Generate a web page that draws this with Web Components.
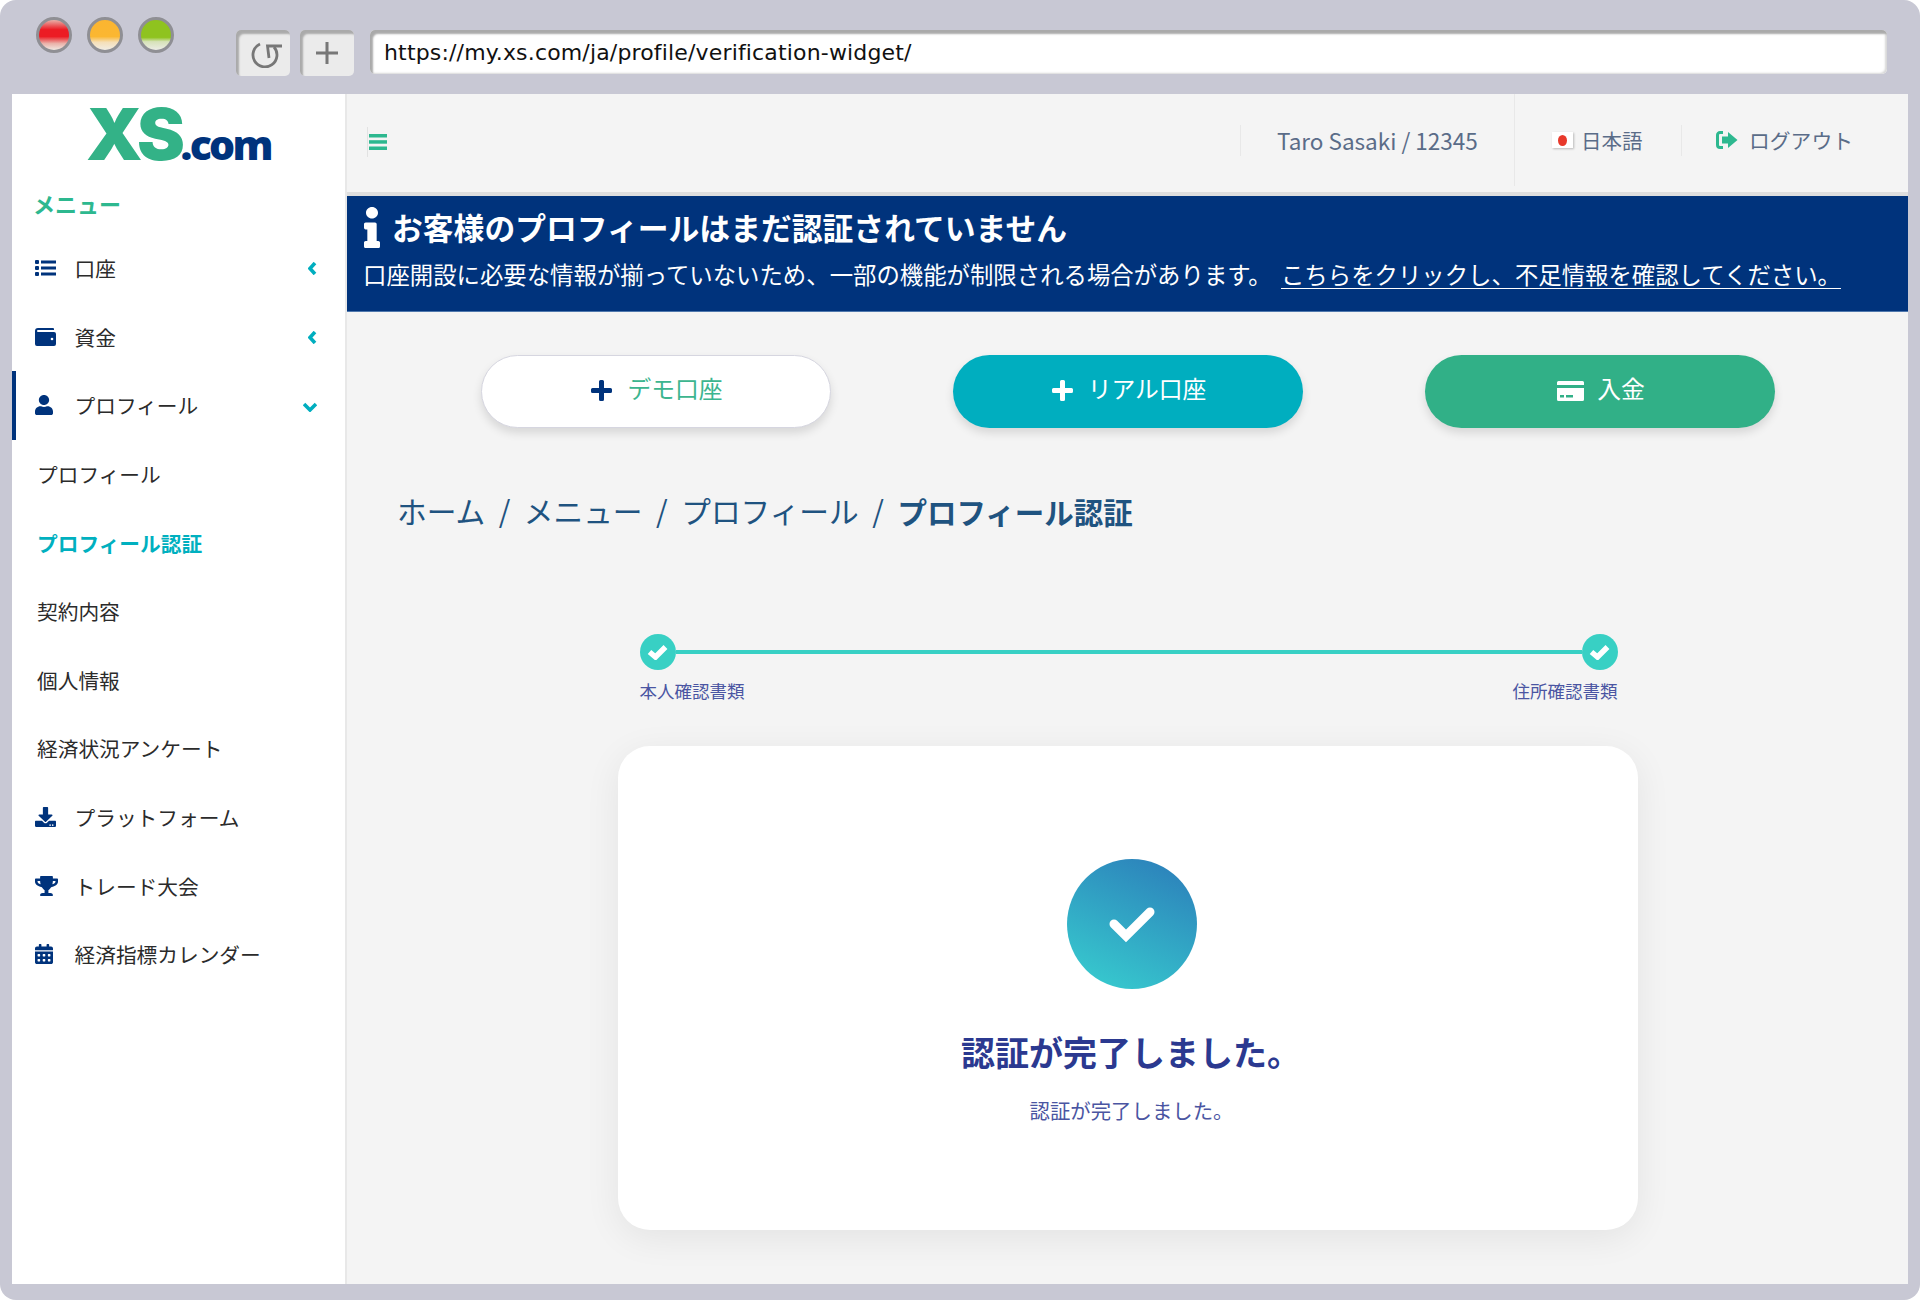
<!DOCTYPE html>
<html lang="ja">
<head>
<meta charset="utf-8">
<title>XS.com</title>
<style>
    html, body { margin: 0; background: #fff; }
    body { font-family: "Noto Sans CJK JP", "Liberation Sans", sans-serif; }
</style>
</head>
<body>
<browser-window url="https://my.xs.com/ja/profile/verification-widget/">
    <side-menu>
        <menu-item icon="list" chevron="left">口座</menu-item>
        <menu-item icon="wallet" chevron="left">資金</menu-item>
        <menu-item icon="user" chevron="down" active>プロフィール</menu-item>
        <menu-item>プロフィール</menu-item>
        <menu-item current>プロフィール認証</menu-item>
        <menu-item>契約内容</menu-item>
        <menu-item>個人情報</menu-item>
        <menu-item>経済状況アンケート</menu-item>
        <menu-item icon="download">プラットフォーム</menu-item>
        <menu-item icon="trophy">トレード大会</menu-item>
        <menu-item icon="calendar">経済指標カレンダー</menu-item>
    </side-menu>
    <main-area>
        <top-bar></top-bar>
        <notice-banner title="お客様のプロフィールはまだ認証されていません"
            link="こちらをクリックし、不足情報を確認してください。">口座開設に必要な情報が揃っていないため、一部の機能が制限される場合があります。</notice-banner>
        <action-row>
            <action-button kind="demo" icon="plus">デモ口座</action-button>
            <action-button kind="real" icon="plus">リアル口座</action-button>
            <action-button kind="deposit" icon="card">入金</action-button>
        </action-row>
        <bread-crumbs current="プロフィール認証">ホーム,メニュー,プロフィール</bread-crumbs>
        <verify-steps first="本人確認書類" last="住所確認書類"></verify-steps>
        <result-card title="認証が完了しました。">認証が完了しました。</result-card>
    </main-area>
</browser-window>

<script>
const FONT = '"Noto Sans CJK JP", "Liberation Sans", sans-serif';
const NAVY = '#00337c';

const ICONS = {
    list: `<svg width="21" height="16" viewBox="0 0 21 16" fill="${NAVY}"><rect y="0" width="4" height="4" rx="1"/><rect y="6" width="4" height="4" rx="1"/><rect y="12" width="4" height="4" rx="1"/><rect x="6" y="0.5" width="15" height="3"/><rect x="6" y="6.5" width="15" height="3"/><rect x="6" y="12.5" width="15" height="3"/></svg>`,
    wallet: `<svg width="21" height="18" viewBox="0 0 21 18"><path fill="${NAVY}" d="M3 0h15a1 1 0 0 1 1 1v1H3a1 1 0 0 0 0 2h16a2 2 0 0 1 2 2v10a2 2 0 0 1-2 2H2a2 2 0 0 1-2-2V3a3 3 0 0 1 3-3z"/><circle cx="17" cy="11" r="1.3" fill="#fff"/></svg>`,
    user: `<svg width="18" height="20" viewBox="0 0 448 512" preserveAspectRatio="none"><path fill="${NAVY}" d="M224 256c70.7 0 128-57.3 128-128S294.7 0 224 0 96 57.3 96 128s57.3 128 128 128zm89.6 32h-16.7c-22.2 10.2-46.9 16-72.9 16s-50.6-5.8-72.9-16h-16.7C60.2 288 0 348.2 0 422.4V464c0 26.5 21.5 48 48 48h352c26.5 0 48-21.5 48-48v-41.6c0-74.2-60.2-134.4-134.4-134.4z"/></svg>`,
    download: `<svg width="21" height="20" viewBox="0 0 512 512" preserveAspectRatio="none"><path fill="${NAVY}" d="M216 0h80c13.3 0 24 10.7 24 24v168h87.7c17.8 0 26.7 21.5 14.1 34.1L269.7 378.3c-7.5 7.5-19.8 7.5-27.3 0L90.1 226.1c-12.6-12.6-3.7-34.1 14.1-34.1H192V24c0-13.3 10.7-24 24-24zm296 376v112c0 13.3-10.7 24-24 24H24c-13.3 0-24-10.7-24-24V376c0-13.3 10.7-24 24-24h146.7l49 49c20.1 20.1 52.5 20.1 72.6 0l49-49H488c13.3 0 24 10.7 24 24zm-124 88c0-11-9-20-20-20s-20 9-20 20 9 20 20 20 20-9 20-20zm64 0c0-11-9-20-20-20s-20 9-20 20 9 20 20 20 20-9 20-20z"/></svg>`,
    trophy: `<svg width="23" height="20" viewBox="0 0 576 512" preserveAspectRatio="none"><path fill="${NAVY}" d="M552 64H448V24c0-13.3-10.7-24-24-24H152c-13.3 0-24 10.7-24 24v40H24C10.7 64 0 74.7 0 88v56c0 35.7 22.5 72.4 61.9 100.7 31.5 22.7 69.8 37.1 110 41.7C203.3 338.5 240 360 240 360v72h-48c-35.3 0-64 20.7-64 56v12c0 6.6 5.4 12 12 12h296c6.6 0 12-5.4 12-12v-12c0-35.3-28.7-56-64-56h-48v-72s36.7-21.5 68.1-73.6c40.3-4.6 78.6-19 110-41.7 39.3-28.3 61.9-65 61.9-100.7V88c0-13.3-10.7-24-24-24zM99.3 192.8C74.9 175.2 64 155.6 64 144v-16h64.2c1 32.6 5.8 61.2 12.8 86.2-15.1-5.2-29.2-12.4-41.7-21.4zM512 144c0 16.1-17.7 36.1-35.3 48.8-12.5 9-26.7 16.2-41.8 21.4 7-25 11.8-53.6 12.8-86.2H512v16z"/></svg>`,
    calendar: `<svg width="18" height="20" viewBox="0 0 448 512" preserveAspectRatio="none"><path fill="${NAVY}" d="M0 464c0 26.5 21.5 48 48 48h352c26.5 0 48-21.5 48-48V192H0v272zm320-196c0-6.6 5.4-12 12-12h40c6.6 0 12 5.4 12 12v40c0 6.6-5.4 12-12 12h-40c-6.6 0-12-5.4-12-12v-40zm0 128c0-6.6 5.4-12 12-12h40c6.6 0 12 5.4 12 12v40c0 6.6-5.4 12-12 12h-40c-6.6 0-12-5.4-12-12v-40zM192 268c0-6.6 5.4-12 12-12h40c6.6 0 12 5.4 12 12v40c0 6.6-5.4 12-12 12h-40c-6.6 0-12-5.4-12-12v-40zm0 128c0-6.6 5.4-12 12-12h40c6.6 0 12 5.4 12 12v40c0 6.6-5.4 12-12 12h-40c-6.6 0-12-5.4-12-12v-40zM64 268c0-6.6 5.4-12 12-12h40c6.6 0 12 5.4 12 12v40c0 6.6-5.4 12-12 12H76c-6.6 0-12-5.4-12-12v-40zm0 128c0-6.6 5.4-12 12-12h40c6.6 0 12 5.4 12 12v40c0 6.6-5.4 12-12 12H76c-6.6 0-12-5.4-12-12v-40zM400 64h-48V16c0-8.8-7.2-16-16-16h-32c-8.8 0-16 7.2-16 16v48H160V16c0-8.8-7.2-16-16-16h-32c-8.8 0-16 7.2-16 16v48H48C21.5 64 0 85.5 0 112v48h448v-48c0-26.5-21.5-48-48-48z"/></svg>`,
    info: `<svg width="16" height="41" viewBox="0 0 192 512" preserveAspectRatio="none"><path fill="#fff" d="M20 424.229h20V279.771H20c-11.046 0-20-8.954-20-20V212c0-11.046 8.954-20 20-20h112c11.046 0 20 8.954 20 20v212.229h20c11.046 0 20 8.954 20 20V492c0 11.046-8.954 20-20 20H20c-11.046 0-20-8.954-20-20v-47.771c0-11.046 8.954-20 20-20zM96 0C56.235 0 24 32.235 24 72s32.235 72 72 72 72-32.235 72-72S135.764 0 96 0z"/></svg>`,
    logout: `<svg width="22" height="18" viewBox="0 0 22 18"><path fill="none" stroke="#2db88f" stroke-width="3" d="M7 1.500H4A2.500 2.500 0 0 0 1.500 4v10A2.500 2.500 0 0 0 4 16.500h3"/><path fill="#2db88f" d="M6 5.500h6V1l9.500 8-9.500 8v-4.500H6z"/></svg>`,
    card: `<svg width="27" height="20" viewBox="0 0 27 20"><path fill="#fff" d="M1.500 0h24A1.500 1.500 0 0 1 27 1.500V4H0V1.500A1.500 1.500 0 0 1 1.500 0zM0 7h27v11.500a1.500 1.500 0 0 1-1.500 1.500h-24A1.500 1.500 0 0 1 0 18.500z"/><rect x="3" y="14" width="4" height="2.500" fill="#31b087"/><rect x="9" y="14" width="7" height="2.500" fill="#31b087"/></svg>`
};

function plusIcon(color) {
    return `<svg width="21" height="21" viewBox="0 0 21 21"><path fill="${color}" d="M8 1.500A1.500 1.500 0 0 1 9.500 0h2A1.500 1.500 0 0 1 13 1.500V8h6.500A1.500 1.500 0 0 1 21 9.500v2a1.500 1.500 0 0 1-1.500 1.500H13v6.500a1.500 1.500 0 0 1-1.500 1.500h-2A1.500 1.500 0 0 1 8 19.500V13H1.500A1.500 1.500 0 0 1 0 11.500v-2A1.500 1.500 0 0 1 1.500 8H8z"/></svg>`;
}

class BrowserWindow extends HTMLElement {
    connectedCallback() {
        const root = this.attachShadow({ mode: 'open' });
        root.innerHTML = `
            <style>
                :host { display: flex; flex-direction: column; width: 1920px; height: 1300px; box-sizing: border-box;
                    background: #c8c8d4; border-radius: 16px; overflow: hidden; }
                .toolbar { display: flex; height: 94px; flex: none; box-sizing: border-box; padding: 17px 33px 0 36px; }
                .lights { display: flex; gap: 15px; height: 36px; }
                .light { width: 36px; height: 36px; box-sizing: border-box; border-radius: 50%; border: 3px solid #8f8f94; }
                .red { background: linear-gradient(#e8b0a8 0%, #ec1c24 32%, #ec1c24 55%, #eab0a8 78%, #efe8e2 100%); }
                .amber { background: linear-gradient(#fbb531 0%, #fbb731 55%, #f5dfb8 74%, #f0ece4 100%); }
                .green { background: linear-gradient(#8fc31f 0%, #8fc31f 58%, #d6e2b8 72%, #ecece6 100%); }
                .btns { display: flex; gap: 10px; margin: 13px 0 0 62px; height: 46px; }
                .btn { display: flex; align-items: center; justify-content: center; width: 54px; height: 46px; border-radius: 5px;
                    background: #ebebeb; box-shadow: inset 3px 4px 2px #aaaaaa; }
                .btn svg.re { margin: 4px 0 0 6px; }
                .url { flex: 1; margin: 13px 0 0 16px; height: 44px; box-sizing: border-box; padding: 4px 0 0 14px; border-radius: 5px;
                    background: #fff; box-shadow: inset 3px 4px 2px #aaaaaa, inset -2px -1px 2px #d8d8d8;
                    font: 22px/38px "DejaVu Sans", sans-serif; color: #111; letter-spacing: 0.16px; }
                .body { flex: 1; display: flex; margin: 0 12px 16px; min-height: 0; }
            </style>
            <div class="toolbar">
                <div class="lights"><div class="light red"></div><div class="light amber"></div><div class="light green"></div></div>
                <div class="btns">
                    <div class="btn"><svg class="re" width="32" height="26" viewBox="0 0 32 26" fill="none" stroke="#777" stroke-width="2.800"><path d="M10 2A12 12 0 1 0 24 5"/><path d="M32 4H17.500L19 16"/></svg></div>
                    <div class="btn"><svg width="22" height="22" viewBox="0 0 22 22"><path fill="#777" d="M9.500 0h3v9.500H22v3h-9.500V22h-3v-9.500H0v-3h9.500z"/></svg></div>
                </div>
                <div class="url">${this.getAttribute('url')}</div>
            </div>
            <div class="body"><slot></slot></div>`;
    }
}

class SideMenu extends HTMLElement {
    connectedCallback() {
        const root = this.attachShadow({ mode: 'open' });
        root.innerHTML = `
            <style>
                :host { display: block; width: 335px; flex: none; box-sizing: border-box; background: #fff; border-right: 2px solid #e8e8e8; }
                .logo { height: 96px; box-sizing: border-box; padding-left: 74px; white-space: nowrap; line-height: 80px; }
                .xs { font: 900 72px/80px Inter, "Liberation Sans", sans-serif; color: #33b287; letter-spacing: -4.500px; }
                .com { font: 800 41px/80px "Open Sans", sans-serif; color: ${NAVY}; letter-spacing: -2.700px; }
                .label { margin: -2px 0 13px 21px; height: 33px; font: bold 22px/30px ${FONT}; color: #2db88f; }
                .items { display: flex; flex-direction: column; }
            </style>
            <div class="logo"><span class="xs">XS</span><span class="com">.com</span></div>
            <div class="label">メニュー</div>
            <div class="items"><slot></slot></div>`;
    }
}

class MenuItem extends HTMLElement {
    connectedCallback() {
        const icon = this.getAttribute('icon');
        const chevron = this.getAttribute('chevron');
        const points = chevron === 'left' ? '7,1 2,6.500 7,12' : '1,2 7,8 13,2';
        const root = this.attachShadow({ mode: 'open' });
        root.innerHTML = `
            <style>
                :host { display: flex; align-items: center; height: 68.600px; box-sizing: border-box; padding: 0 28px 0 25px;
                    font: 20.700px/28px ${FONT}; color: #2b2b2b; }
                :host([icon]) { padding-left: 23px; }
                :host([active]) { box-shadow: inset 4px 0 0 ${NAVY}; }
                :host([current]) { font-weight: bold; color: #00b0bf; }
                .icon { display: flex; width: 39.500px; flex: none; }
                .chev { margin-left: auto; display: flex; margin-top: 1px; }
                :host([chevron="down"]) .chev { margin-top: 4px; }
            </style>
            ${icon ? `<span class="icon">${ICONS[icon]}</span>` : ''}
            <span><slot></slot></span>
            ${chevron ? `<span class="chev"><svg width="${chevron === 'left' ? 9 : 14}" height="${chevron === 'left' ? 13 : 10}" fill="none" stroke="#00aebf" stroke-width="3.600"><polyline points="${points}"/></svg></span>` : ''}`;
    }
}

class MainArea extends HTMLElement {
    connectedCallback() {
        const root = this.attachShadow({ mode: 'open' });
        root.innerHTML = `
            <style>
                :host { display: flex; flex-direction: column; flex: 1; min-width: 0; background: #f4f4f4; }
            </style>
            <slot></slot>`;
    }
}

class TopBar extends HTMLElement {
    connectedCallback() {
        const root = this.attachShadow({ mode: 'open' });
        root.innerHTML = `
            <style>
                :host { display: flex; align-items: center; height: 102px; flex: none; box-sizing: border-box; padding-bottom: 6px;
                    background: #f4f4f4; border-bottom: 4px solid #dedede; font: 20.800px/30px ${FONT}; color: #5a6c88; }
                .menu { display: flex; margin: 4px 0 0 20px; padding-left: 1px; border-left: 1px solid #e2e2e2; height: 30px; align-items: center; }
                .menu svg { display: block; }
                .cell { display: flex; align-items: center; height: 100%; }
                .user { margin-left: auto; height: 31px; border-left: 1px solid #e8e8e8; padding-left: 36px; width: 274px; box-sizing: border-box; font-size: 22.500px; }
                .lang { border-left: 1px solid #e8e8e8; width: 167px; box-sizing: border-box; padding-left: 37px; gap: 8px; font-size: 20.500px; }
                .flag { display: flex; align-items: center; justify-content: center; width: 21px; height: 16px; background: #fff; box-shadow: 1px 1px 2px #bbb; }
                .flag i { width: 9px; height: 11px; border-radius: 50%; background: #e8392b; }
                .out { border-left: 1px solid #e8e8e8; height: 31px; padding-left: 34px; width: 227px; box-sizing: border-box; gap: 11px; }
            </style>
            <div class="menu"><svg width="18" height="16" viewBox="0 0 18 16" fill="#2db88f"><rect width="18" height="3.500"/><rect y="6.200" width="18" height="3.500"/><rect y="12.500" width="18" height="3.500"/></svg></div>
            <div class="cell user">Taro Sasaki / 12345</div>
            <div class="cell lang"><span class="flag"><i></i></span>日本語</div>
            <div class="cell out">${ICONS.logout}ログアウト</div>`;
    }
}

class NoticeBanner extends HTMLElement {
    connectedCallback() {
        const root = this.attachShadow({ mode: 'open' });
        root.innerHTML = `
            <style>
                :host { display: block; height: 116px; flex: none; box-sizing: border-box; padding: 11px 17px 0; background: ${NAVY};
                    border-bottom: 1px solid #4f78ad; color: #fff; }
                .head { display: flex; align-items: center; gap: 12px; height: 41px; font: bold 30.800px/41px ${FONT}; white-space: nowrap; }
                .head span { margin-top: -2px; }
                p { margin: 8.500px 0 0 -1px; font: 23.400px/34px ${FONT}; white-space: nowrap; }
                a { color: #fff; text-decoration: underline; text-underline-offset: 4px; text-decoration-thickness: 1px; margin-left: 4px; }
            </style>
            <div class="head">${ICONS.info}<span>${this.getAttribute('title')}</span></div>
            <p><slot></slot> <a href="#">${this.getAttribute('link')}</a></p>`;
    }
}

class ActionRow extends HTMLElement {
    connectedCallback() {
        const root = this.attachShadow({ mode: 'open' });
        root.innerHTML = `
            <style>
                :host { display: flex; justify-content: center; gap: 122px; margin-top: 43px; flex: none; }
            </style>
            <slot></slot>`;
    }
}

class ActionButton extends HTMLElement {
    connectedCallback() {
        const kind = this.getAttribute('kind');
        const icon = this.getAttribute('icon') === 'card' ? ICONS.card : plusIcon(kind === 'demo' ? NAVY : '#fff');
        const root = this.attachShadow({ mode: 'open' });
        root.innerHTML = `
            <style>
                :host { display: flex; align-items: center; justify-content: center; gap: 15px; width: 350px; height: 73px; box-sizing: border-box;
                    padding-left: 3px; border-radius: 37px; font: 23.800px/30px ${FONT}; color: #fff; box-shadow: 0 5px 10px rgba(0,0,0,.12); }
                :host([kind="demo"]) { background: #fff; color: #3cb58f; border: 1px solid #d6d6e0; }
                :host([kind="real"]) { background: #00aebf; }
                :host([kind="deposit"]) { background: #31b087; gap: 13px; }
                .i { display: flex; margin-bottom: 2px; }
                .t { margin-bottom: 7px; }
            </style>
            <span class="i">${icon}</span><span class="t"><slot></slot></span>`;
    }
}

class BreadCrumbs extends HTMLElement {
    connectedCallback() {
        const parts = this.textContent.trim().split(',');
        const root = this.attachShadow({ mode: 'open' });
        root.innerHTML = `
            <style>
                :host { display: flex; gap: 13.500px; height: 42px; margin: 63px 0 0 50px; flex: none; font: 29.700px/40px ${FONT}; color: #1f5380; white-space: nowrap; }
                b { font-weight: bold; font-size: 29.500px; }
            </style>
            ${parts.map(p => `<span>${p}</span><span>/</span>`).join('')}<b>${this.getAttribute('current')}</b>`;
    }
}

class VerifySteps extends HTMLElement {
    connectedCallback() {
        const check = `<svg width="21" height="16" viewBox="0 0 21 16" fill="none" stroke="#fff" stroke-width="5.500"><polyline points="2.500,8 8.500,13 18.500,3"/></svg>`;
        const root = this.attachShadow({ mode: 'open' });
        root.innerHTML = `
            <style>
                :host { display: block; width: 980px; box-sizing: border-box; padding-left: 2px; margin: 101px auto 0; flex: none; font: 17.500px/20px ${FONT}; color: #4a55a2; }
                .track { display: flex; align-items: center; }
                .dot { display: flex; align-items: center; justify-content: center; width: 36px; height: 36px; border-radius: 50%; background: #38d0c4; }
                .line { flex: 1; height: 4px; background: #38d0c4; }
                .labels { display: flex; justify-content: space-between; margin-top: 11px; white-space: nowrap; }
            </style>
            <div class="track"><div class="dot">${check}</div><div class="line"></div><div class="dot">${check}</div></div>
            <div class="labels"><span>${this.getAttribute('first')}</span><span>${this.getAttribute('last')}</span></div>`;
    }
}

class ResultCard extends HTMLElement {
    connectedCallback() {
        const root = this.attachShadow({ mode: 'open' });
        root.innerHTML = `
            <style>
                :host { display: flex; flex-direction: column; align-items: center; width: 1020px; height: 484px; box-sizing: border-box;
                    margin: 45px auto 0; padding-top: 113px; flex: none; background: #fff; border-radius: 32px;
                    box-shadow: 0 8px 36px rgba(0,0,0,.07); color: #2b3990; }
                .circle { display: flex; align-items: center; justify-content: center; width: 130px; height: 130px; border-radius: 50%; margin-left: 8px;
                    background: linear-gradient(205deg, #2b7bb9 0%, #38d0d0 100%); }
                h2 { margin: 42.500px 0 0 7px; font: bold 34px/40px ${FONT}; }
                p { margin: 26.500px 0 0 8px; font: 20.400px/24px ${FONT}; color: #4a55a2; }
            </style>
            <div class="circle"><svg width="48" height="38" viewBox="0 0 48 38" fill="none" stroke="#fff" stroke-width="9" stroke-linejoin="miter" stroke-linecap="round"><polyline points="6,19 18,31 42,7"/></svg></div>
            <h2>${this.getAttribute('title')}</h2>
            <p><slot></slot></p>`;
    }
}

customElements.define('browser-window', BrowserWindow);
customElements.define('side-menu', SideMenu);
customElements.define('menu-item', MenuItem);
customElements.define('main-area', MainArea);
customElements.define('top-bar', TopBar);
customElements.define('notice-banner', NoticeBanner);
customElements.define('action-row', ActionRow);
customElements.define('action-button', ActionButton);
customElements.define('bread-crumbs', BreadCrumbs);
customElements.define('verify-steps', VerifySteps);
customElements.define('result-card', ResultCard);
</script>
</body>
</html>
